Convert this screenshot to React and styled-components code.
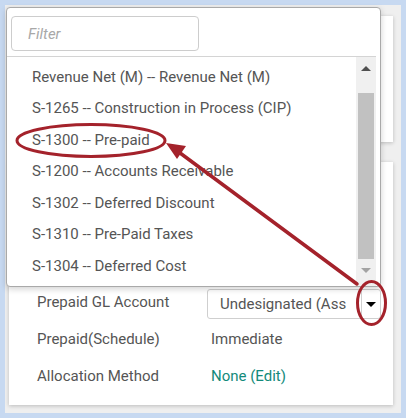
import React from "react";
import styled, { createGlobalStyle } from "styled-components";

const GlobalStyle = createGlobalStyle`
  html, body {
    margin: 0;
    padding: 0;
    background: #c7d9f1;
    font-family: Roboto, "Liberation Sans", Arial, sans-serif;
  }
  * { box-sizing: border-box; }
`;

const items = [
  "Revenue Net (M) -- Revenue Net (M)",
  "S-1265 -- Construction in Process (CIP)",
  "S-1300 -- Pre-paid",
  "S-1200 -- Accounts Receivable",
  "S-1302 -- Deferred Discount",
  "S-1310 -- Pre-Paid Taxes",
  "S-1304 -- Deferred Cost",
];

function App() {
  return (
    <>
      <GlobalStyle />
      <Frame>
        <Page>
          <TopCard />
          <FormCard>
            <Row>
              <Label>Prepaid GL Account</Label>
              <Select>
                <SelectText>Undesignated (Ass</SelectText>
                <SelectButton>
                  <Caret $color="#000" />
                </SelectButton>
              </Select>
            </Row>
            <Row>
              <Label>Prepaid(Schedule)</Label>
              <Value>Immediate</Value>
            </Row>
            <Row>
              <Label>Allocation Method</Label>
              <Value $link>None (Edit)</Value>
            </Row>
          </FormCard>
        </Page>

        <Popup>
          <FilterWrap>
            <FilterInput placeholder="Filter" />
          </FilterWrap>
          <ListArea>
            <List>
              {items.map((t) => (
                <Item key={t}>{t}</Item>
              ))}
            </List>
            <Scrollbar>
              <ScrollArrow>
                <Caret $up $color="#505050" />
              </ScrollArrow>
              <Thumb />
              <ScrollArrow>
                <Caret $color="#a3a3a3" />
              </ScrollArrow>
            </Scrollbar>
          </ListArea>
        </Popup>

        <Annotation viewBox="0 0 406 418" width="406" height="418">
          <ellipse cx="91" cy="140.5" rx="74" ry="16" fill="none" stroke="#a4222b" strokeWidth="3" />
          <line x1="357" y1="284" x2="176" y2="150" stroke="#a4222b" strokeWidth="3.5" strokeLinecap="round" />
          <polygon points="166,143 186,146 177,159" fill="#a4222b" />
          <ellipse cx="371.5" cy="303" rx="14" ry="21.5" fill="none" stroke="#a4222b" strokeWidth="3" />
        </Annotation>
      </Frame>
    </>
  );
}

const Frame = styled.div`
  position: relative;
  width: 406px;
  height: 418px;
  padding: 5px 5px 5px 5px;
  overflow: hidden;
`;

const Page = styled.div`
  height: 408px;
  background: #efefef;
  padding: 11px 8px 0 4px;
  display: flex;
  flex-direction: column;
  gap: 20px;
`;

const Card = styled.div`
  background: #fff;
  box-shadow: 0 1px 4px rgba(0, 0, 0, 0.22);
`;

const TopCard = styled(Card)`
  height: 126px;
`;

const FormCard = styled(Card)`
  height: 243px;
  padding: 125px 0 0 28px;
  display: flex;
  flex-direction: column;
  gap: 7px;
`;

const Row = styled.div`
  display: flex;
  align-items: center;
  height: 30px;
`;

const Label = styled.div`
  width: 170px;
  font-size: 15px;
  color: #555;
`;

const Value = styled.div`
  padding-left: 4px;
  font-size: 15px;
  color: ${(p) => (p.$link ? "#138a7b" : "#555")};
`;

const Select = styled.div`
  display: flex;
  width: 174px;
  height: 30px;
  border: 1px solid #cfcfcf;
  border-radius: 3px;
  margin-top: 4px;
`;

const SelectText = styled.div`
  flex: 1;
  padding-left: 12px;
  display: flex;
  align-items: center;
  font-size: 15px;
  color: #555;
  white-space: nowrap;
  overflow: hidden;
`;

const SelectButton = styled.div`
  width: 19px;
  border-left: 1px solid #cfcfcf;
  display: flex;
  align-items: center;
  justify-content: center;
`;

const Caret = styled.span`
  width: 0;
  height: 0;
  border-left: 5px solid transparent;
  border-right: 5px solid transparent;
  ${(p) =>
    p.$up
      ? `border-bottom: 5px solid ${p.$color};`
      : `border-top: 5px solid ${p.$color};`}
`;

const Popup = styled.div`
  position: absolute;
  left: 6px;
  top: 7px;
  width: 375px;
  height: 280px;
  background: #fff;
  border: 1px solid #a9a9a9;
  border-radius: 4px;
  box-shadow: 0 2px 6px rgba(0, 0, 0, 0.18);
  display: flex;
  flex-direction: column;
`;

const FilterWrap = styled.div`
  padding: 8px 4px 4px 4px;
  border-bottom: 1px solid #d4d4d4;
  margin-right: 4px;
  height: 49px;
`;

const FilterInput = styled.input`
  width: 188px;
  height: 35px;
  border: 1px solid #cdcdcd;
  border-radius: 4px;
  padding: 0 0 0 16px;
  font-family: Roboto, "Liberation Sans", Arial, sans-serif;
  font-size: 15px;
  outline: none;
  &::placeholder {
    color: #a8a8a8;
    font-style: italic;
  }
`;

const ListArea = styled.div`
  flex: 1;
  display: flex;
  padding-right: 4px;
`;

const List = styled.div`
  flex: 1;
  padding: 4px 0 0 25px;
`;

const Item = styled.div`
  height: 31.5px;
  display: flex;
  align-items: center;
  font-size: 15px;
  color: #555;
  white-space: nowrap;
`;

const Scrollbar = styled.div`
  width: 20px;
  background: #f0f0f0;
  display: flex;
  flex-direction: column;
  padding-bottom: 5px;
`;

const ScrollArrow = styled.div`
  height: 22px;
  display: flex;
  align-items: center;
  justify-content: center;
`;

const Thumb = styled.div`
  flex: 1;
  margin: 14px 2px 0 2px;
  background: #c1c1c1;
`;

const Annotation = styled.svg`
  position: absolute;
  left: 0;
  top: 0;
  pointer-events: none;
`;

export default App;
